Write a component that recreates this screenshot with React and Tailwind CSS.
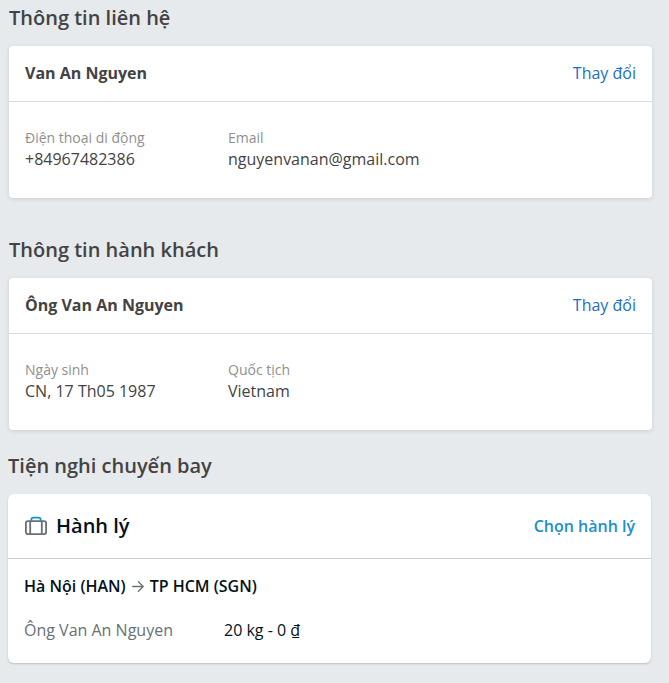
const contact = [
  { label: "Điện thoại di động", value: "+84967482386" },
  { label: "Email", value: "nguyenvanan@gmail.com" },
];

const passenger = [
  { label: "Ngày sinh", value: "CN, 17 Th05 1987" },
  { label: "Quốc tịch", value: "Vietnam" },
];

function SectionTitle({ children }) {
  return (
    <h2 className="mb-[14px] text-[20px] leading-7 font-semibold text-[#434343]">
      {children}
    </h2>
  );
}

function LuggageIcon() {
  return (
    <svg
      width="24"
      height="20"
      viewBox="0 0 24 20"
      fill="none"
      strokeWidth="1.8"
      strokeLinejoin="round"
      aria-hidden="true"
    >
      <rect x="1.9" y="5.1" width="20.2" height="13" rx="2" stroke="#687176" />
      <path d="M6.2 5.1v13M17.8 5.1v13" stroke="#687176" />
      <path d="M7.4 5V3.4a1.8 1.8 0 0 1 1.8-1.8h5.6a1.8 1.8 0 0 1 1.8 1.8V5" stroke="#1a8fd0" />
    </svg>
  );
}

function ArrowIcon() {
  return (
    <svg
      className="mx-[6px]"
      width="12"
      height="12"
      viewBox="0 0 12 12"
      fill="none"
      stroke="#687176"
      strokeWidth="1.3"
      strokeLinecap="round"
      strokeLinejoin="round"
      role="img"
      aria-label="đến"
    >
      <path d="M0.7 6.5h10.5M6.4 1.7l4.8 4.8-4.8 4.8" />
    </svg>
  );
}

function InfoCard({ name, fields }) {
  return (
    <div className="rounded bg-white shadow-[0_1px_4px_rgba(0,0,0,0.12)]">
      <div className="flex items-center justify-between border-b border-[#dadada] px-4 pt-[15px] pb-4 leading-6">
        <h3 className="text-base leading-6 font-bold text-[#434343]">{name}</h3>
        <button type="button" className="cursor-pointer text-base leading-6 text-[#1b6fc2]">
          Thay đổi
        </button>
      </div>
      <dl className="flex flex-wrap px-4 pt-[26px] pb-7">
        {fields.map((field) => (
          <div key={field.label} className="min-w-[203px]">
            <dt className="text-sm leading-5 text-[#8f8f8f]">{field.label}</dt>
            <dd className="text-base leading-[22px] text-[#434343]">{field.value}</dd>
          </div>
        ))}
      </dl>
    </div>
  );
}

export default function App() {
  return (
    <main className="min-h-screen bg-[#e6eaed] pt-1 pb-5 font-['Open_Sans','Noto_Sans',sans-serif]">
      <section className="pr-[17px] pl-[9px]">
        <SectionTitle>Thông tin liên hệ</SectionTitle>
        <InfoCard name="Van An Nguyen" fields={contact} />
      </section>

      <section className="mt-[38px] pr-[17px] pl-[9px]">
        <SectionTitle>Thông tin hành khách</SectionTitle>
        <InfoCard name="Ông Van An Nguyen" fields={passenger} />
      </section>

      <section className="mt-[22px] pr-[18px] pl-2">
        <SectionTitle>Tiện nghi chuyến bay</SectionTitle>
        <div className="rounded-md bg-white shadow-[0_1px_2px_rgba(3,18,26,0.2)]">
          <div className="flex items-center justify-between border-b border-[#cdd0d1] px-4 py-[18px]">
            <div className="flex items-center gap-2">
              <LuggageIcon />
              <h3 className="text-[20px] leading-7 font-semibold text-[#03121a]">Hành lý</h3>
            </div>
            <button type="button" className="cursor-pointer text-base leading-6 font-semibold text-[#1a8fd0]">
              Chọn hành lý
            </button>
          </div>
          <div className="px-4 pt-[15px] pb-[21px]">
            <div className="flex items-center text-base leading-6 font-semibold text-[#03121a]">
              <span>Hà Nội (HAN)</span>
              <ArrowIcon />
              <span>TP HCM (SGN)</span>
            </div>
            <div className="mt-5 flex text-base leading-6">
              <span className="w-[200px] text-[#687176]">Ông Van An Nguyen</span>
              <span className="text-[#03121a]">20 kg - 0 ₫</span>
            </div>
          </div>
        </div>
      </section>
    </main>
  );
}
